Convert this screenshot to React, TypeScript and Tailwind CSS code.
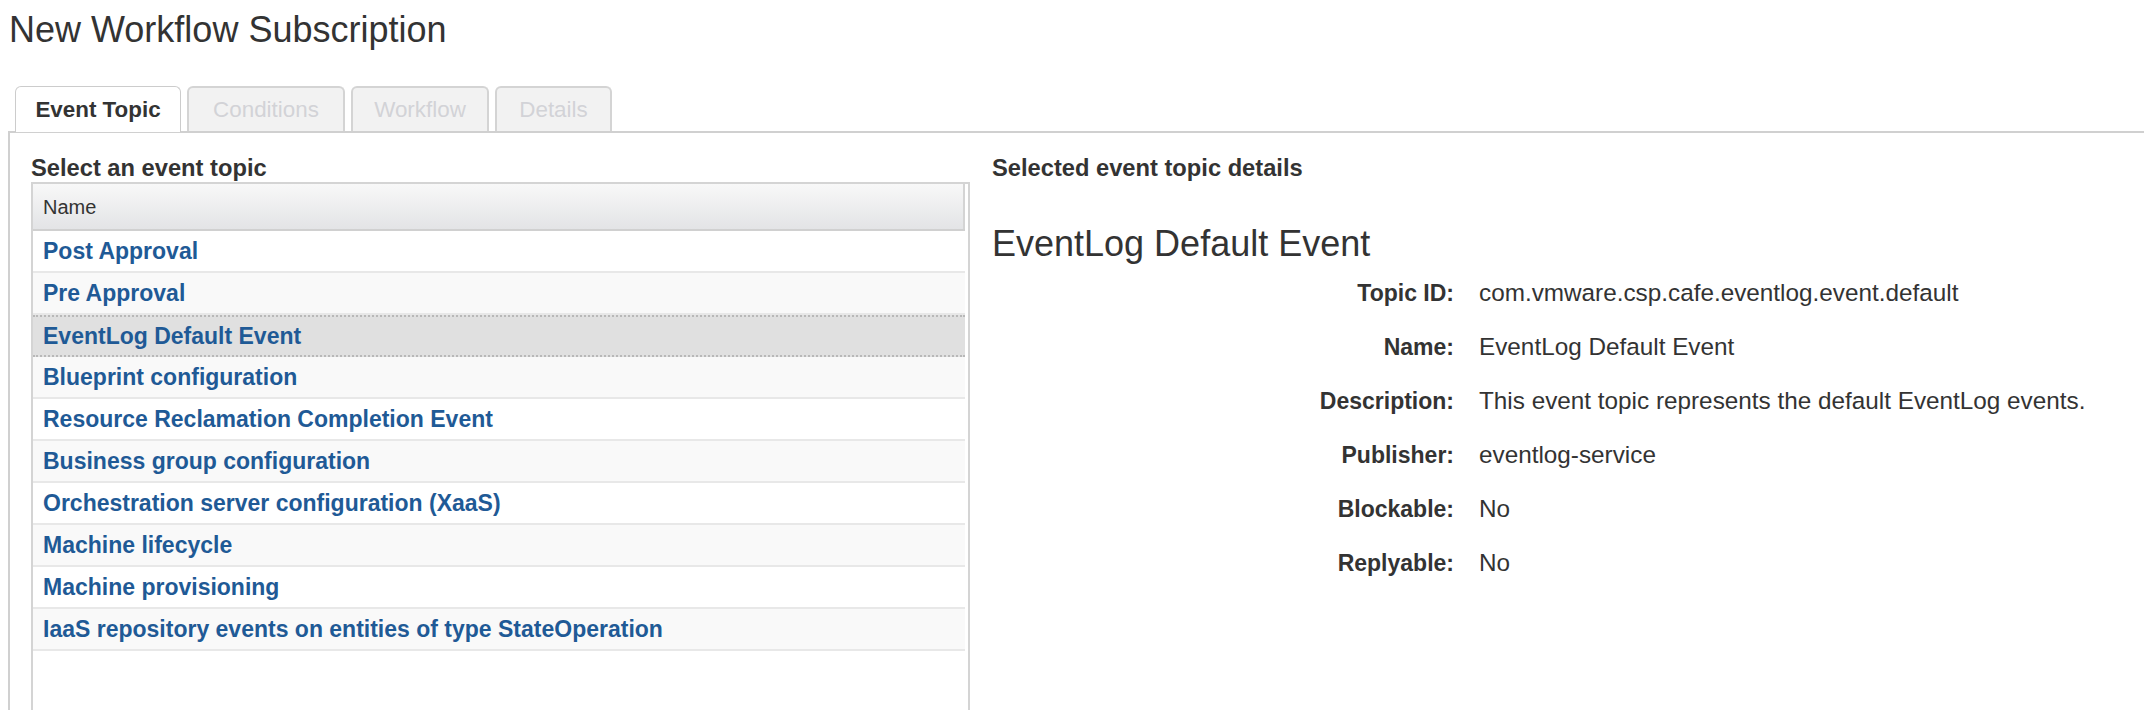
import React from 'react';

const topics = [
    'Post Approval',
    'Pre Approval',
    'EventLog Default Event',
    'Blueprint configuration',
    'Resource Reclamation Completion Event',
    'Business group configuration',
    'Orchestration server configuration (XaaS)',
    'Machine lifecycle',
    'Machine provisioning',
    'IaaS repository events on entities of type StateOperation',
];

const tabs = [
    { label: 'Event Topic', width: 'w-[166px]', active: true },
    { label: 'Conditions', width: 'w-[158px]', active: false },
    { label: 'Workflow', width: 'w-[138px]', active: false },
    { label: 'Details', width: 'w-[117px]', active: false },
];

const details = [
    { label: 'Topic ID:', value: 'com.vmware.csp.cafe.eventlog.event.default' },
    { label: 'Name:', value: 'EventLog Default Event' },
    { label: 'Description:', value: 'This event topic represents the default EventLog events.' },
    { label: 'Publisher:', value: 'eventlog-service' },
    { label: 'Blockable:', value: 'No' },
    { label: 'Replyable:', value: 'No' },
];

const SELECTED = 2;

export default function App() {
    return (
        <div className="h-[710px] w-[2144px] overflow-hidden bg-white text-[#333333] font-['Liberation_Sans',Arial,sans-serif]">
            {/* Title */}
            <h1 className="pl-[9px] pt-[12px] text-[36px] leading-[36px] font-normal">
                New Workflow Subscription
            </h1>

            {/* Tabs */}
            <div className="ml-[8px] mt-[38px] flex items-end gap-[6px] pl-[7px] relative z-10 h-[45px]">
                {tabs.map((tab) =>
                    tab.active ? (
                        <div
                            key={tab.label}
                            className={`${tab.width} h-[46px] -mb-px flex items-center justify-center rounded-t-[6px] border border-b-0 border-[#cccccc] bg-white text-[22.4px] font-bold text-[#333333]`}
                        >
                            {tab.label}
                        </div>
                    ) : (
                        <div
                            key={tab.label}
                            className={`${tab.width} h-[45px] flex items-center justify-center rounded-t-[6px] border-2 border-b-0 border-[#d4d4d4] bg-[#f2f2f2] text-[22.4px] text-[#d2d3d7]`}
                        >
                            {tab.label}
                        </div>
                    )
                )}
            </div>

            {/* Tab panel */}
            <div className="ml-[8px] flex h-[600px] border-l-2 border-t-2 border-[#d0d0d0]">
                {/* Topic list */}
                <div className="ml-[21px] w-[939px] flex flex-col">
                    <div className="pt-[21px] text-[23.7px] leading-[28px] font-bold">Select an event topic</div>
                    <div className="flex-1 border-2 border-[#d4d4d4] pr-[3px]">
                        <div className="flex h-[47px] border-b-2 border-[#d0d0d0] bg-gradient-to-b from-[#f8f8f8] to-[#e3e4e6]">
                            <div className="flex flex-1 items-center border-r-2 border-[#d4d4d4] pl-[10px] text-[20px]">
                                Name
                            </div>
                        </div>
                        {topics.map((topic, i) => (
                            <div
                                key={topic}
                                className={
                                    i === SELECTED
                                        ? 'flex h-[42px] items-center border-y-2 border-dotted border-[#b8b8b8] bg-[#e0e0e0] pl-[10px] text-[23px] font-bold text-[#1f5a96]'
                                        : `flex h-[42px] items-center border-b-2 border-[#e8e8e8] pl-[10px] text-[23px] font-bold text-[#1f5a96] ${i % 2 === 1 ? 'bg-[#f9f9f9]' : 'bg-white'}`
                                }
                            >
                                {topic}
                            </div>
                        ))}
                    </div>
                </div>

                {/* Selected topic details */}
                <div className="ml-[22px] flex-1">
                    <div className="pt-[21px] text-[23.7px] leading-[28px] font-bold">Selected event topic details</div>
                    <div className="mt-[44px] text-[36px] leading-[36px]">EventLog Default Event</div>
                    <div className="mt-[4px] grid grid-cols-[462px_auto] gap-x-[25px]">
                        {details.map((d) => (
                            <React.Fragment key={d.label}>
                                <div className="flex h-[54px] items-center justify-end text-[23px] font-bold">{d.label}</div>
                                <div className="flex h-[54px] items-center text-[24.3px]">{d.value}</div>
                            </React.Fragment>
                        ))}
                    </div>
                </div>
            </div>
        </div>
    );
}
